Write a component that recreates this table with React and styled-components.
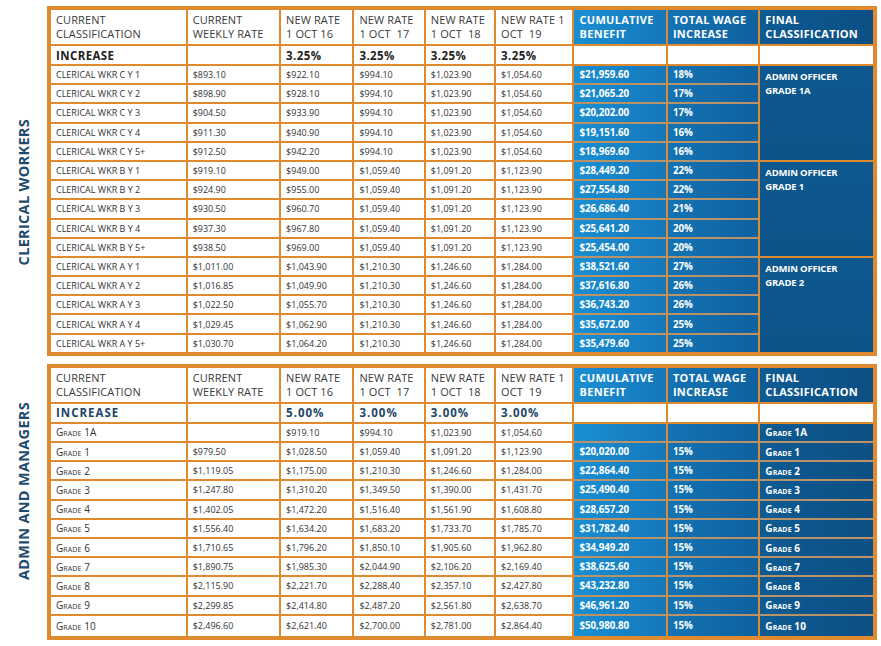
import React from 'react';
import styled, { createGlobalStyle, css } from 'styled-components';

const ORANGE = '#e08a30';
const SEAM = '#b99268';

const GlobalStyle = createGlobalStyle`
  html, body {
    margin: 0;
    background: #fff;
    font-family: 'Open Sans', 'DejaVu Sans', sans-serif;
  }
`;

const Page = styled.div`
  width: 881px;
  height: 646px;
  padding-top: 6px;
  box-sizing: border-box;
  display: flex;
  flex-direction: column;
  gap: 8px;
`;

const Section = styled.section`
  display: flex;
  align-items: stretch;
`;

const SideBox = styled.div`
  width: 47px;
  display: flex;
  align-items: center;
  justify-content: center;
  padding-top: ${p => p.$down || 0}px;
  padding-bottom: ${p => p.$up || 0}px;
  box-sizing: border-box;
`;

const SideLabel = styled.h2`
  margin: 0;
  writing-mode: vertical-rl;
  transform: rotate(180deg);
  font-size: 14.5px;
  font-weight: 700;
  color: #1f4b6d;
  letter-spacing: 0.3px;
  white-space: nowrap;
`;

const Table = styled.table`
  width: 830px;
  table-layout: fixed;
  border-collapse: collapse;
  border: 4px solid ${ORANGE};
`;

const blues = {
  cum: css`background: linear-gradient(90deg, #1b8fd3, #1477ba);`,
  wage: css`background: linear-gradient(90deg, #1473b4, #0f619e);`,
  final: css`background: linear-gradient(90deg, #0e5b93, #0b4f84);`,
};

const HeadCell = styled.th`
  height: 34px;
  padding: 0 5px;
  border: 2px solid ${ORANGE};
  text-align: left;
  vertical-align: middle;
  font-size: 11px;
  line-height: 14px;
  font-weight: 400;
  color: #3a3a3a;
  letter-spacing: 0.1px;
  ${p => p.$tone && css`
    ${blues[p.$tone]}
    color: #fff;
    font-weight: 700;
    letter-spacing: 0.3px;
  `}
`;

const IncCell = styled.td`
  height: 18px;
  padding: 0 5px;
  border: 2px solid ${ORANGE};
  font-size: 11.5px;
  font-weight: 700;
  color: ${p => (p.$navy ? '#1d4566' : '#222')};
  letter-spacing: ${p => (p.$navy ? '1px' : '0.4px')};
`;

const Cell = styled.td`
  height: 17.2px;
  padding: 0 5px;
  border: 2px solid ${ORANGE};
  font-size: 9px;
  color: #333;
  white-space: nowrap;
  overflow: hidden;
  ${p => p.$tone && css`
    ${blues[p.$tone]}
    color: #fff;
    font-weight: 700;
    font-size: 9.8px;
    letter-spacing: -0.1px;
    border-top-color: ${SEAM};
    border-bottom-color: ${SEAM};
  `}
`;

const BlockCell = styled.td`
  padding: 4px 5px 0;
  border: 2px solid ${ORANGE};
  vertical-align: top;
  background: linear-gradient(180deg, #0d5890, #0c5389);
  color: #fff;
  font-size: 9.5px;
  font-weight: 700;
  line-height: 14px;
  letter-spacing: -0.2px;
`;

const Grade = styled.span`
  font-variant: small-caps;
  font-size: 10px;
  letter-spacing: 0.1px;
`;

const LastRow = styled.tr`
  td { height: 20px; }
`;

const widths = [137, 93, 73, 71, 70, 78, 93, 92, 115];

const Cols = () => (
  <colgroup>
    {widths.map((w, i) => <col key={i} style={{ width: w }} />)}
  </colgroup>
);

const Header = () => (
  <tr>
    <HeadCell>CURRENT<br />CLASSIFICATION</HeadCell>
    <HeadCell>CURRENT<br />WEEKLY RATE</HeadCell>
    <HeadCell>NEW RATE<br />1 OCT 16</HeadCell>
    <HeadCell>NEW RATE<br />1 OCT&nbsp; 17</HeadCell>
    <HeadCell>NEW RATE<br />1 OCT&nbsp; 18</HeadCell>
    <HeadCell>NEW RATE 1<br />OCT&nbsp; 19</HeadCell>
    <HeadCell $tone="cum">CUMULATIVE<br />BENEFIT</HeadCell>
    <HeadCell $tone="wage">TOTAL WAGE<br />INCREASE</HeadCell>
    <HeadCell $tone="final">FINAL<br />CLASSIFICATION</HeadCell>
  </tr>
);

const clerical = [
  ['C Y 1', '893.10', '922.10', '994.10', '1,023.90', '1,054.60', '21,959.60', '18%'],
  ['C Y 2', '898.90', '928.10', '994.10', '1,023.90', '1,054.60', '21,065.20', '17%'],
  ['C Y 3', '904.50', '933.90', '994.10', '1,023.90', '1,054.60', '20,202.00', '17%'],
  ['C Y 4', '911.30', '940.90', '994.10', '1,023.90', '1,054.60', '19,151.60', '16%'],
  ['C Y 5+', '912.50', '942.20', '994.10', '1,023.90', '1,054.60', '18,969.60', '16%'],
  ['B Y 1', '919.10', '949.00', '1,059.40', '1,091.20', '1,123.90', '28,449.20', '22%'],
  ['B Y 2', '924.90', '955.00', '1,059.40', '1,091.20', '1,123.90', '27,554.80', '22%'],
  ['B Y 3', '930.50', '960.70', '1,059.40', '1,091.20', '1,123.90', '26,686.40', '21%'],
  ['B Y 4', '937.30', '967.80', '1,059.40', '1,091.20', '1,123.90', '25,641.20', '20%'],
  ['B Y 5+', '938.50', '969.00', '1,059.40', '1,091.20', '1,123.90', '25,454.00', '20%'],
  ['A Y 1', '1,011.00', '1,043.90', '1,210.30', '1,246.60', '1,284.00', '38,521.60', '27%'],
  ['A Y 2', '1,016.85', '1,049.90', '1,210.30', '1,246.60', '1,284.00', '37,616.80', '26%'],
  ['A Y 3', '1,022.50', '1,055.70', '1,210.30', '1,246.60', '1,284.00', '36,743.20', '26%'],
  ['A Y 4', '1,029.45', '1,062.90', '1,210.30', '1,246.60', '1,284.00', '35,672.00', '25%'],
  ['A Y 5+', '1,030.70', '1,064.20', '1,210.30', '1,246.60', '1,284.00', '35,479.60', '25%'],
];

const blocks = { 0: 'GRADE 1A', 5: 'GRADE 1', 10: 'GRADE 2' };

const admin = [
  ['1A', '', '919.10', '994.10', '1,023.90', '1,054.60', '', ''],
  ['1', '979.50', '1,028.50', '1,059.40', '1,091.20', '1,123.90', '20,020.00', '15%'],
  ['2', '1,119.05', '1,175.00', '1,210.30', '1,246.60', '1,284.00', '22,864.40', '15%'],
  ['3', '1,247.80', '1,310.20', '1,349.50', '1,390.00', '1,431.70', '25,490.40', '15%'],
  ['4', '1,402.05', '1,472.20', '1,516.40', '1,561.90', '1,608.80', '28,657.20', '15%'],
  ['5', '1,556.40', '1,634.20', '1,683.20', '1,733.70', '1,785.70', '31,782.40', '15%'],
  ['6', '1,710.65', '1,796.20', '1,850.10', '1,905.60', '1,962.80', '34,949.20', '15%'],
  ['7', '1,890.75', '1,985.30', '2,044.90', '2,106.20', '2,169.40', '38,625.60', '15%'],
  ['8', '2,115.90', '2,221.70', '2,288.40', '2,357.10', '2,427.80', '43,232.80', '15%'],
  ['9', '2,299.85', '2,414.80', '2,487.20', '2,561.80', '2,638.70', '46,961.20', '15%'],
  ['10', '2,496.60', '2,621.40', '2,700.00', '2,781.00', '2,864.40', '50,980.80', '15%'],
];

const money = v => (v ? `$${v}` : '');

const Rates = ({ row }) =>
  row.slice(1, 6).map((v, i) => <Cell key={i}>{money(v)}</Cell>);

export default function App() {
  return (
    <>
      <GlobalStyle />
      <Page>
        <Section>
          <SideBox $down={22}>
            <SideLabel>CLERICAL WORKERS</SideLabel>
          </SideBox>
          <Table>
            <Cols />
            <tbody>
              <Header />
              <tr>
                <IncCell>INCREASE</IncCell>
                <IncCell />
                <IncCell>3.25%</IncCell>
                <IncCell>3.25%</IncCell>
                <IncCell>3.25%</IncCell>
                <IncCell>3.25%</IncCell>
                <IncCell />
                <IncCell />
                <IncCell />
              </tr>
              {clerical.map((r, i) => (
                <tr key={r[0]}>
                  <Cell>CLERICAL WKR {r[0]}</Cell>
                  <Rates row={r} />
                  <Cell $tone="cum">${r[6]}</Cell>
                  <Cell $tone="wage">{r[7]}</Cell>
                  {blocks[i] && (
                    <BlockCell rowSpan={5}>ADMIN OFFICER<br />{blocks[i]}</BlockCell>
                  )}
                </tr>
              ))}
            </tbody>
          </Table>
        </Section>

        <Section>
          <SideBox $up={22}>
            <SideLabel>ADMIN AND MANAGERS</SideLabel>
          </SideBox>
          <Table>
            <Cols />
            <tbody>
              <Header />
              <tr>
                <IncCell $navy>INCREASE</IncCell>
                <IncCell />
                <IncCell $navy>5.00%</IncCell>
                <IncCell $navy>3.00%</IncCell>
                <IncCell $navy>3.00%</IncCell>
                <IncCell $navy>3.00%</IncCell>
                <IncCell />
                <IncCell />
                <IncCell />
              </tr>
              {admin.map((r, i) => {
                const Row = i === admin.length - 1 ? LastRow : 'tr';
                return (
                  <Row key={r[0]}>
                    <Cell><Grade>Grade {r[0]}</Grade></Cell>
                    <Rates row={r} />
                    <Cell $tone="cum">{money(r[6])}</Cell>
                    <Cell $tone="wage">{r[7]}</Cell>
                    <Cell $tone="final"><Grade>Grade {r[0]}</Grade></Cell>
                  </Row>
                );
              })}
            </tbody>
          </Table>
        </Section>
      </Page>
    </>
  );
}
